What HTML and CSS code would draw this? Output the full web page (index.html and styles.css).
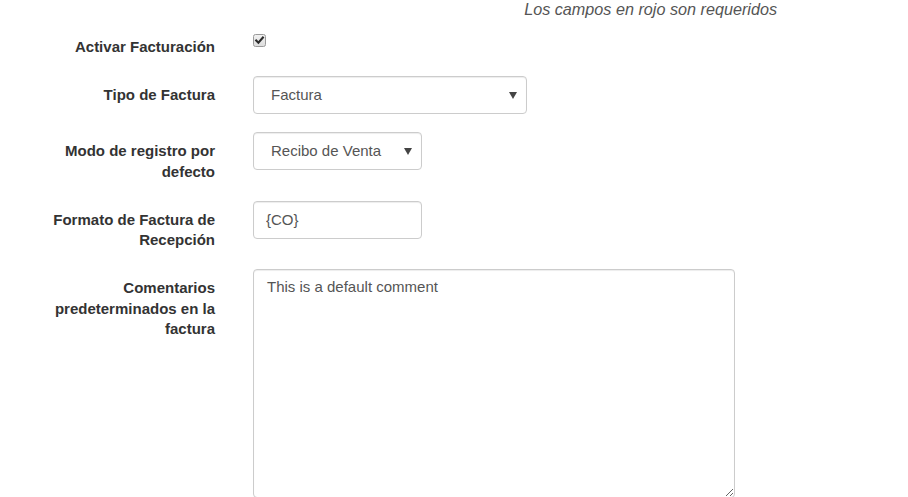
FILE: index.html
```html
<!DOCTYPE html>
<html lang="es">
<head>
<meta charset="utf-8">
<title>Facturación</title>
<link rel="stylesheet" href="styles.css">
</head>
<body>
<div class="page">
  <p class="note">Los campos en rojo son requeridos</p>
  <form class="form">
    <div class="group group-check">
      <label class="label">Activar Facturación</label>
      <div class="control">
        <span class="checkbox" role="checkbox" aria-checked="true">
          <svg width="13" height="13" viewBox="0 0 13 13">
            <defs>
              <linearGradient id="cbg" x1="0" y1="0" x2="0" y2="1">
                <stop offset="0" stop-color="#f2f2f2"/>
                <stop offset="1" stop-color="#dcdcdc"/>
              </linearGradient>
            </defs>
            <rect x="0.5" y="0.5" width="12" height="12" rx="2" fill="url(#cbg)" stroke="#9a9a9a"/>
            <path d="M3.2 6.6 L5.4 8.8 L9.9 3.6" fill="none" stroke="#2b2b2b" stroke-width="2.1" stroke-linecap="square"/>
          </svg>
        </span>
      </div>
    </div>
    <div class="group">
      <label class="label">Tipo de Factura</label>
      <div class="control">
        <div class="select-wrap w-wide">
          <select class="field select"><option>Factura</option></select>
          <svg class="arrow" width="8" height="7" viewBox="0 0 8 7"><path d="M0 0 H8 L4 7 Z" fill="#444"/></svg>
        </div>
      </div>
    </div>
    <div class="group">
      <label class="label">Modo de registro por defecto</label>
      <div class="control">
        <div class="select-wrap w-narrow">
          <select class="field select"><option>Recibo de Venta</option></select>
          <svg class="arrow" width="8" height="7" viewBox="0 0 8 7"><path d="M0 0 H8 L4 7 Z" fill="#444"/></svg>
        </div>
      </div>
    </div>
    <div class="group">
      <label class="label">Formato de Factura de Recepción</label>
      <div class="control">
        <input class="field input w-narrow" type="text" value="{CO}">
      </div>
    </div>
    <div class="group">
      <label class="label">Comentarios predeterminados en la factura</label>
      <div class="control">
        <textarea class="field textarea">This is a default comment</textarea>
      </div>
    </div>
  </form>
</div>
</body>
</html>
```

FILE: styles.css
```css
html, body {
  margin: 0;
  padding: 0;
  background: #fff;
  overflow: hidden;
}

body {
  font-family: "Liberation Sans", Arial, sans-serif;
  font-size: 15px;
  line-height: 1.42857;
  color: #333;
}

.page {
  width: 908px;
  height: 497px;
  overflow: hidden;
}

.note {
  margin: 0 0 10px 0;
  padding-right: 131px;
  text-align: right;
  font-size: 16.2px;
  line-height: 18px;
  font-style: italic;
  color: #555;
}

.form {
  margin: 0;
}

.group {
  display: flex;
  align-items: flex-start;
  margin-bottom: 18px;
}

.label {
  box-sizing: border-box;
  width: 230px;
  flex: none;
  padding: 9px 15px 0.5px 30px;
  text-align: right;
  font-weight: bold;
  line-height: 20.5px;
  color: #333;
}

.control {
  padding-left: 23px;
}

.group-check {
  height: 30px;
}

.group-check .label {
  padding-top: 8.5px;
}

.group-check .control {
  padding-top: 6px;
}

.checkbox {
  display: block;
  width: 13px;
  height: 13px;
}

.checkbox svg {
  display: block;
}

.field {
  box-sizing: border-box;
  display: block;
  margin: 0;
  height: 38px;
  padding: 7px 12px;
  font-family: "Liberation Sans", Arial, sans-serif;
  font-size: 15px;
  line-height: 21.5px;
  color: #555;
  background: #fff;
  border: 1px solid #ccc;
  border-radius: 4px;
  box-shadow: inset 0 1px 1px rgba(0, 0, 0, 0.075);
  outline: none;
}

.select-wrap {
  position: relative;
}

.select {
  width: 100%;
  -webkit-appearance: none;
  appearance: none;
  padding-left: 17px;
}

.arrow {
  position: absolute;
  right: 10px;
  top: 16px;
  pointer-events: none;
}

.w-wide {
  width: 274px;
}

.w-narrow {
  width: 169px;
}

.textarea {
  width: 482px;
  height: 229px;
  resize: both;
  padding: 6px 13px;
}
```
